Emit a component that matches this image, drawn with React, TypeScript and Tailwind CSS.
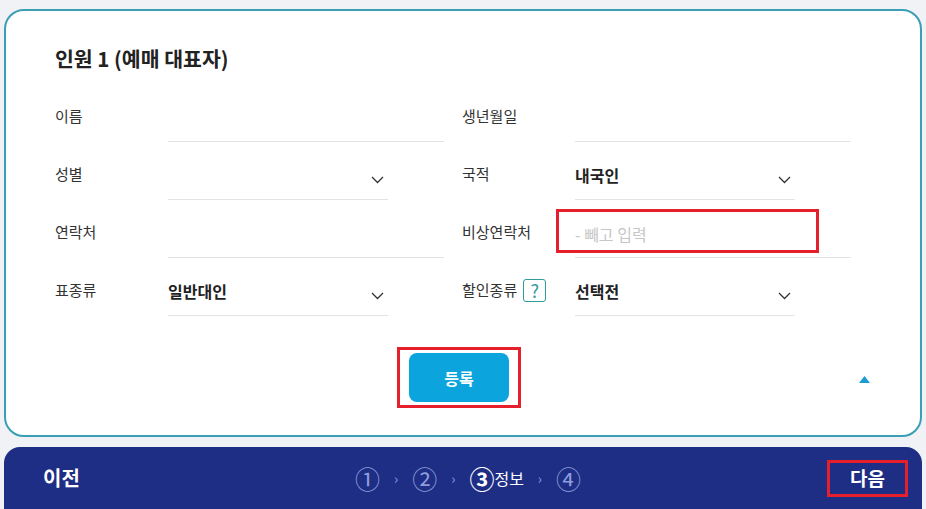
import type { ReactNode } from "react";

const font = { fontFamily: '"Noto Sans CJK KR", "Noto Sans", sans-serif' };

function Chevron() {
  return (
    <svg width="13" height="8" viewBox="0 0 13 8" className="mt-[4px] shrink-0">
      <polyline points="1,1 6.5,6.5 12,1" fill="none" stroke="#333" strokeWidth="1.3" />
    </svg>
  );
}

function Row({ label, children }: { label: ReactNode; children: ReactNode }) {
  return (
    <div className="flex items-center">
      <div className="w-[113px] shrink-0 pb-[8px] text-[15px] text-[#333]">{label}</div>
      {children}
    </div>
  );
}

function Field({ value, select, narrow }: { value?: string; select?: boolean; narrow?: boolean }) {
  return (
    <div
      className={`flex h-[44px] items-center justify-between border-b border-[#e3e3e3] ${
        narrow ? "w-[220px] pr-[4px]" : "w-[276px]"
      }`}>
      <span className="pb-[6px] text-[16px] font-bold text-[#222]">{value}</span>
      {select && <Chevron />}
    </div>
  );
}

export default function App() {
  return (
    <div className="min-h-[509px] bg-[#f0f2f6] px-[4px] pt-[9px]" style={font}>
      <div className="rounded-[20px] border-2 border-[#3a9fb5] bg-white pb-[27px] pl-[49px] pt-[33px]">
        <h2 className="text-[20.5px] font-bold leading-[28px] text-[#222]">인원 1 (예매 대표자)</h2>

        <div className="mt-[26px] grid grid-cols-[389px_390px] gap-x-[18px] gap-y-[14px]">
          <Row label="이름">
            <Field />
          </Row>
          <Row label="생년월일">
            <Field />
          </Row>

          <Row label="성별">
            <Field select narrow />
          </Row>
          <Row label="국적">
            <Field value="내국인" select narrow />
          </Row>

          <Row label="연락처">
            <Field />
          </Row>
          <Row label="비상연락처">
            <div className="relative flex h-[44px] w-[276px] items-center border-b border-[#e3e3e3]">
              <span className="pb-[4px] text-[16px] text-[#c6c6c6]">- 빼고 입력</span>
              <div className="absolute left-[-19px] top-[-5px] h-[44px] w-[263px] border-[3px] border-[#e5202c]" />
            </div>
          </Row>

          <Row label="표종류">
            <Field value="일반대인" select narrow />
          </Row>
          <Row
            label={
              <span className="flex items-center gap-[6px]">
                할인종류
                <span className="flex h-[23px] w-[23px] items-center justify-center rounded-[3px] border border-[#2f9c9c] text-[18px] leading-none text-[#2f9c9c]">
                  ?
                </span>
              </span>
            }>
            <Field value="선택전" select narrow />
          </Row>
        </div>

        <div className="relative mt-[31px] flex justify-center pr-[57px]">
          <div className="border-[3px] border-[#e5202c] px-[9px] py-[3px]">
            <button className="h-[49px] w-[100px] rounded-[8px] bg-[#0ba4dc] text-[16px] font-bold text-white">
              등록
            </button>
          </div>
          <svg
            width="11"
            height="7"
            viewBox="0 0 11 7"
            className="absolute right-[50px] top-[29px]">
            <polygon points="5.5,0 11,7 0,7" fill="#1a9cd0" />
          </svg>
        </div>
      </div>

      <div className="mt-[10px] grid h-[62px] grid-cols-[1fr_auto_1fr] items-center rounded-t-[16px] bg-[#1e2e84] pl-[39px] pr-[14px]">
        <span className="text-[20px] font-bold text-white">이전</span>
        <div className="mr-[15px] flex items-center gap-[14px] text-[#8e9ddd]">
          <span className="text-[25px] leading-none">①</span>
          <span className="text-[14px]">›</span>
          <span className="text-[25px] leading-none">②</span>
          <span className="text-[14px]">›</span>
          <span className="flex items-center text-white">
            <span className="text-[25px] font-bold leading-none">③</span>
            <span className="text-[16px]">정보</span>
          </span>
          <span className="text-[14px]">›</span>
          <span className="text-[25px] leading-none">④</span>
        </div>
        <div className="justify-self-end border-[3px] border-[#e5202c] px-[20px] leading-[29px]">
          <span className="text-[19px] font-bold text-white">다음</span>
        </div>
      </div>
    </div>
  );
}
